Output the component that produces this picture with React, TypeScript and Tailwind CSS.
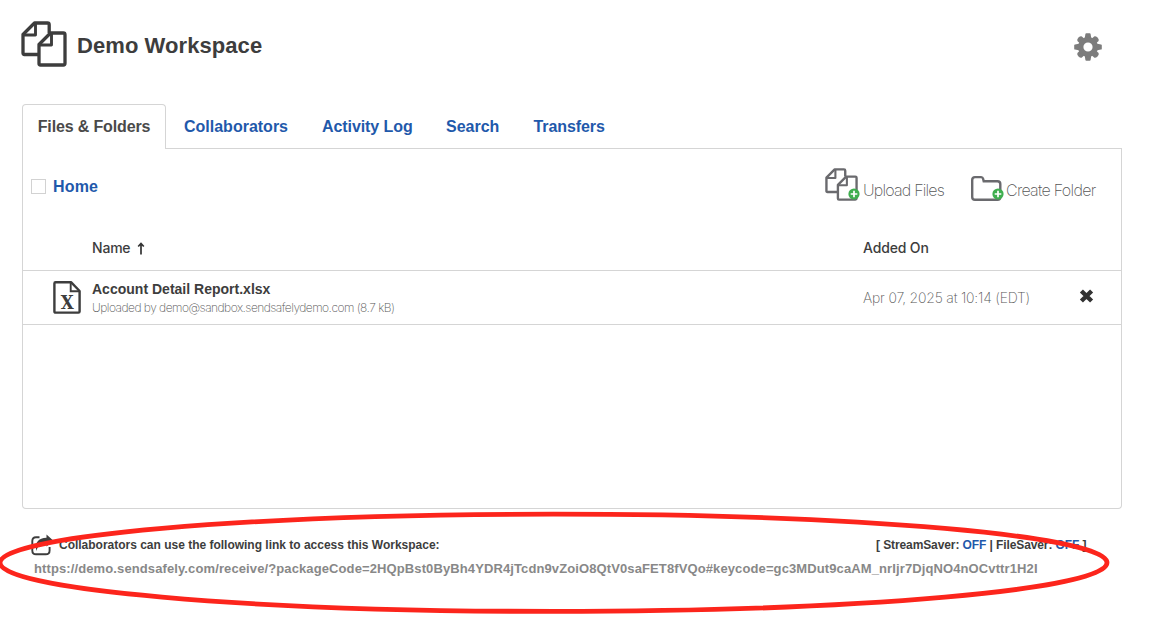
import React from "react";

const tabs = ["Collaborators", "Activity Log", "Search", "Transfers"];
const tabSpacing = ["ml-[18px] w-[104px]", "ml-[34px] w-[90px] tracking-[-0.08px]", "ml-[34px] w-[53px]", "ml-[34.5px] w-[72px] tracking-[-0.08px]"];

function FilesIcon({ size, className }: { size: number; className?: string }) {
  return (
    <svg width={size} height={size} viewBox="0 0 46 46" fill="none" stroke="currentColor" strokeWidth="3.3" strokeLinejoin="round" className={className}>
      <path d="M17 33.5H3.4Q2 33.5 2 32V13.5L13.5 2H26.5Q28.2 2 28.2 3.7V12" />
      <path d="M2.5 14H14.5V2.5" strokeWidth="2.9" />
      <path d="M19.5 44Q18 44 18 42.5V23.5L29.5 12H42.3Q44 12 44 13.7V42.3Q44 44 42.3 44Z" />
      <path d="M18.5 24H30.5V12.5" strokeWidth="2.9" />
    </svg>
  );
}

function PlusBadge({ className }: { className: string }) {
  return (
    <svg width="12" height="12" viewBox="0 0 12 12" className={className}>
      <circle cx="6" cy="6" r="5.6" fill="#3fae4f" />
      <path d="M6 2.7V9.3M2.7 6H9.3" stroke="#fff" strokeWidth="1.7" />
    </svg>
  );
}

export default function App() {
  return (
    <main className="relative h-[630px] w-[1153px] overflow-hidden bg-white font-['Liberation_Sans',Arial,sans-serif] text-[#3d3d3d]">
      <header className="flex h-[104px] items-start justify-between pl-[21px] pr-[51px]">
        <div className="flex pt-[21px]">
          <FilesIcon size={46} />
          <h1 className="ml-[10px] mt-[11px] whitespace-nowrap text-[22px] font-bold leading-[28px] tracking-[0.07px]">Demo Workspace</h1>
        </div>
        <svg width="28" height="28" viewBox="0 0 28 28" className="mt-[33px] text-[#7c7c7c]" fill="currentColor">
          <g>
            {[0, 90, 180, 270].map((a) => (
              <path key={a} d="M10.6 6L11.4 1Q11.5 .2 12.3 .2H15.7Q16.5 .2 16.6 1L17.4 6Z" transform={`rotate(${a} 14 14)`} />
            ))}
            {[45, 135, 225, 315].map((a) => (
              <path key={a} d="M10.8 6V2.2Q11.4 .6 14 .6Q16.6 .6 17.2 2.2V6Z" transform={`rotate(${a} 14 14)`} />
            ))}
          </g>
          <path fillRule="evenodd" d="M14 4a10 10 0 1 1 0 20a10 10 0 1 1 0-20ZM14 9.4a4.6 4.6 0 1 0 0 9.2a4.6 4.6 0 1 0 0-9.2Z" />
        </svg>
      </header>

      <div className="ml-[22px] w-[1100px]">
        <nav className="flex h-[45px] text-[16px] font-bold">
          <div className="z-10 flex w-[144px] items-center justify-center whitespace-nowrap rounded-t-[4px] border border-b-0 border-[#d5d5d5] bg-white text-[#4a4a4a] tracking-[-0.14px]">Files &amp; Folders</div>
          <div className="flex flex-1 items-center border-b border-[#d5d5d5] text-[#1f59ab]">
            {tabs.map((tab, i) => (
              <a key={tab} className={`whitespace-nowrap pt-[1px] ${tabSpacing[i]}`}>{tab}</a>
            ))}
          </div>
        </nav>

        <section className="h-[360px] rounded-b-[4px] border border-t-0 border-[#d5d5d5]">
          <div className="flex h-[77px] items-start justify-between">
            <div className="flex items-center pl-[8px] pt-[26px]">
              <span className="h-[15px] w-[15px] border border-[#d2d2d2]" />
              <a className="ml-[7px] pt-[2px] text-[16px] font-bold leading-[20px] tracking-[0.15px] text-[#1f59ab]">Home</a>
            </div>
            <div className="flex font-['Inter',sans-serif] text-[16px] font-extralight text-[#565656]">
              <div className="relative mt-[19px] flex w-[145px]">
                <FilesIcon size={33} className="-ml-px mr-px text-[#6a6a6e]" />
                <PlusBadge className="absolute left-[22px] top-[20px]" />
                <span className="ml-[4px] mt-[11px] whitespace-nowrap leading-[22px] tracking-[-0.8px]">Upload Files</span>
              </div>
              <div className="relative mt-[19px] flex w-[150px]">
                <svg width="31" height="33" viewBox="0 0 31 33" fill="none" stroke="#6a6a6e" strokeWidth="2.4">
                  <path d="M1.2 12Q1.2 9.1 4 9.1H10.2Q11.7 9.1 12.1 10.8L12.7 13.2H26.5Q29.3 13.2 29.3 16V29Q29.3 31.8 26.5 31.8H4Q1.2 31.8 1.2 29Z" />
                </svg>
                <PlusBadge className="absolute left-[21px] top-[20px]" />
                <span className="ml-[4px] mt-[11px] whitespace-nowrap leading-[22px] tracking-[-0.7px]">Create Folder</span>
              </div>
            </div>
          </div>

          <div className="flex h-[45px] items-center border-b border-[#d5d5d5] pb-[2px] pl-[69px] font-['Inter',sans-serif] text-[14px] font-medium">
            <div className="flex w-[771px] items-center">
              <span className="tracking-[-0.2px]">Name</span>
              <svg width="8" height="13" viewBox="0 0 8 13" className="ml-[7px] mt-[2px]" fill="none" stroke="#333" strokeWidth="1.7">
                <path d="M4 12.5V2M1.2 4.5L4 1.5L6.8 4.5" />
              </svg>
            </div>
            <span className="tracking-[-0.15px]">Added On</span>
          </div>

          <div className="flex h-[54px] border-b border-[#d5d5d5]">
            <svg width="28" height="33" viewBox="0 0 28 33" className="ml-[30px] mt-[10px]" fill="none" stroke="#3d3d3d" strokeWidth="2.4">
              <path d="M2.6 1.2H18L26.6 10V30.4Q26.6 31.6 25.4 31.6H2.6Q1.4 31.6 1.4 30.4V2.4Q1.4 1.2 2.6 1.2Z" strokeLinejoin="round" />
              <path d="M17.7 1.5V10.3H26.5" strokeWidth="1.9" />
              <text x="14.3" y="27.6" textAnchor="middle" fill="#3d3d3d" stroke="none" fontFamily="DejaVu Serif, serif" fontWeight="bold" fontSize="18.5" textLength="13" lengthAdjust="spacingAndGlyphs">X</text>
            </svg>
            <div className="ml-[11px] w-[771px] pt-[8px]">
              <div className="text-[14px] font-bold leading-[20px] tracking-[0.01px]">Account Detail Report.xlsx</div>
              <div className="whitespace-nowrap font-['Inter',sans-serif] text-[12px] font-extralight leading-[17px] tracking-[-0.53px] text-[#565656]">Uploaded by demo@sandbox.sendsafelydemo.com (8.7 kB)</div>
            </div>
            <div className="w-[216px] pt-[17px] font-['Inter',sans-serif] text-[14px] font-extralight leading-[20px] tracking-[-0.2px] text-[#565656]">Apr 07, 2025 at 10:14 (EDT)</div>
            <svg width="15" height="14" viewBox="0 0 15 14" className="mt-[18px]" stroke="#333" strokeWidth="4.4">
              <path d="M2.4 2L12.6 12M12.6 2L2.4 12" />
            </svg>
          </div>
        </section>
      </div>

      <footer className="pl-[31px] pt-[25px] font-bold">
        <div className="flex h-[23px] items-start text-[12px] leading-[16px]">
          <svg width="23" height="23" viewBox="0 0 23 23" fill="none" stroke="#3d3d3d" strokeWidth="1.9" className="shrink-0">
            <path d="M8.5 3.2H5Q1.3 3.2 1.3 6.9V16.4Q1.3 20.2 5 20.2H14.8Q18.6 20.2 18.6 16.4V13" />
            <path d="M15.5 .5L22.2 6.4L15.5 12.4V9.2C10.5 8.8 6.6 10.5 5.6 17C2.8 9 7.7 3.9 15.5 3.8Z" fill="#3d3d3d" stroke="none" />
          </svg>
          <span className="ml-[5px] mt-[3px] w-[817px] whitespace-nowrap tracking-[-0.01px]">Collaborators can use the following link to access this Workspace:</span>
          <span className="mt-[3px] whitespace-nowrap tracking-[-0.1px]">[ StreamSaver: <a className="text-[#1f59ab]">OFF</a> | FileSaver: <a className="text-[#1f59ab]">OFF</a> ]</span>
        </div>
        <div className="ml-[3px] mt-[3px] whitespace-nowrap text-[13px] leading-[18px] tracking-[0.11px] text-[#888]">https://demo.sendsafely.com/receive/?packageCode=2HQpBst0ByBh4YDR4jTcdn9vZoiO8QtV0saFET8fVQo#keycode=gc3MDut9caAM_nrIjr7DjqNO4nOCvttr1H2I</div>
      </footer>

      <svg width="1153" height="630" viewBox="0 0 1153 630" className="pointer-events-none absolute inset-0">
        <ellipse cx="553.5" cy="562.8" rx="553.5" ry="48.6" fill="none" stroke="#fc251c" strokeWidth="4.8" />
      </svg>
    </main>
  );
}
